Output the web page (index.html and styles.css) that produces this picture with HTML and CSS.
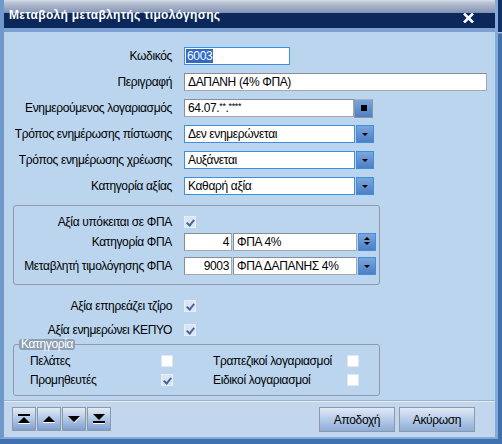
FILE: index.html
```html
<!DOCTYPE html>
<html>
<head>
<meta charset="utf-8">
<link rel="stylesheet" href="styles.css">
</head>
<body>
<div class="win">
  <div class="title">
    <span class="title-text">Μεταβολή μεταβλητής τιμολόγησης</span>
    <svg class="close" width="11" height="10" viewBox="0 0 11 10"><path d="M1 0.5 L10 9.5 M10 0.5 L1 9.5" stroke="#fff" stroke-width="2.6"/></svg>
  </div>
  <div class="band"></div>
  <div class="content">
    <div class="rows">
      <div class="row"><span class="lbl">Κωδικός</span><div class="inp blue w-code"><span class="hl">6003</span></div></div>
      <div class="row"><span class="lbl">Περιγραφή</span><div class="inp gray w-desc">ΔΑΠΑΝΗ (4% ΦΠΑ)</div></div>
      <div class="row"><span class="lbl">Ενημερούμενος λογαριασμός</span><div class="inp gray w-acc">64.07.<sup>**</sup>.<sup>****</sup></div><div class="btn sq"><span class="sqdot"></span></div></div>
      <div class="row"><span class="lbl">Τρόπος ενημέρωσης πίστωσης</span><div class="inp blue w-sel">Δεν ενημερώνεται</div><div class="btn dd"><span class="tri"></span></div></div>
      <div class="row"><span class="lbl">Τρόπος ενημέρωσης χρέωσης</span><div class="inp blue w-sel">Αυξάνεται</div><div class="btn dd"><span class="tri"></span></div></div>
      <div class="row"><span class="lbl">Κατηγορία αξίας</span><div class="inp blue w-sel">Καθαρή αξία</div><div class="btn dd"><span class="tri"></span></div></div>
    </div>

    <div class="group fpa">
      <div class="row chk-row"><span class="lbl">Αξία υπόκειται σε ΦΠΑ</span><span class="cb on"></span></div>
      <div class="row r2"><span class="lbl">Κατηγορία ΦΠΑ</span><div class="inp gray w-num">4</div><div class="inp gray w-sel2">ΦΠΑ 4%</div><div class="btn dd"><span class="tri dbl"></span></div></div>
      <div class="row r3"><span class="lbl">Μεταβλητή τιμολόγησης ΦΠΑ</span><div class="inp gray w-num">9003</div><div class="inp gray w-sel2">ΦΠΑ ΔΑΠΑΝΗΣ 4%</div><div class="btn dd"><span class="tri"></span></div></div>
    </div>

    <div class="flags">
      <div class="row chk-row"><span class="lbl">Αξία επηρεάζει τζίρο</span><span class="cb on"></span></div>
      <div class="row chk-row"><span class="lbl">Αξία ενημερώνει ΚΕΠΥΟ</span><span class="cb on"></span></div>
    </div>

    <div class="group cat">
      <span class="legend">Κατηγορία</span>
      <div class="cat-grid">
        <span class="cl1">Πελάτες</span><span class="cb"></span>
        <span class="cl2">Τραπεζικοί λογαριασμοί</span><span class="cb"></span>
        <span class="cl1">Προμηθευτές</span><span class="cb on"></span>
        <span class="cl2">Ειδικοί λογαριασμοί</span><span class="cb"></span>
      </div>
    </div>
  </div>
  <div class="footer">
    <div class="nav">
      <div class="nbtn"><svg width="14" height="10" viewBox="0 0 14 10"><rect x="1" y="0" width="12" height="2" fill="#000"/><path d="M7 3 L13 9 L1 9 Z" fill="#000"/><rect x="1" y="9" width="12" height="1" fill="#fff"/></svg></div>
      <div class="nbtn"><svg width="14" height="10" viewBox="0 0 14 10"><path d="M7 2 L13 8 L1 8 Z" fill="#000"/><rect x="1" y="8" width="12" height="1" fill="#fff"/></svg></div>
      <div class="nbtn"><svg width="14" height="10" viewBox="0 0 14 10"><path d="M1 2 L13 2 L7 8 Z" fill="#000"/><path d="M7 9 L13 3" stroke="#fff" stroke-width="1"/></svg></div>
      <div class="nbtn"><svg width="14" height="10" viewBox="0 0 14 10"><path d="M1 0 L13 0 L7 6 Z" fill="#000"/><rect x="1" y="7" width="12" height="2" fill="#000"/><rect x="1" y="9" width="12" height="1" fill="#fff"/></svg></div>
    </div>
    <div class="actions">
      <div class="abtn">Αποδοχή</div>
      <div class="abtn">Ακύρωση</div>
    </div>
  </div>
</div>
</body>
</html>
```

FILE: styles.css
```css
* { box-sizing: border-box; }
html, body { margin: 0; padding: 0; }
body {
  width: 502px;
  height: 444px;
  overflow: hidden;
  background: linear-gradient(#0f2f68 0, #0f2f68 32px, #d9e6f4 32px, #3f70b0 34px);
  font-family: "Liberation Sans", Arial, sans-serif;
  font-size: 12px;
  letter-spacing: -0.35px;
  color: #000;
}
.win {
  width: 498px;
  height: 439px;
  background: #bbd5ef;
  border-left: 4px solid #6f99ca;
  border-right: 3px solid #86aad6;
  border-bottom: 2px solid #86aad6;
  display: flex;
  flex-direction: column;
}
.title {
  height: 28px;
  flex: none;
  background: linear-gradient(#d5dde8 0, #b7c1d1 3px, #8d9cbb 11px, #7f90b2 13px, #0c285a 13px, #0c285a 28px);
  display: flex;
  align-items: flex-start;
  justify-content: space-between;
  padding: 8px 21px 0 5px;
}
.title-text {
  color: #fff;
  font-family: "Liberation Sans", Arial, sans-serif;
  font-weight: bold;
  font-size: 12px;
  letter-spacing: 0.3px;
  line-height: 14px;
}
.close { margin-top: 5px; }
.band { height: 4px; flex: none; background: #7ba0d1; }
.content {
  flex: 1;
  padding: 15px 0 0 0;
}
.rows { display: flex; flex-direction: column; gap: 8px; }
.row { display: flex; align-items: center; height: 18px; }
.lbl {
  width: 168px;
  margin-right: 12px;
  text-align: right;
  white-space: nowrap;
}
.inp {
  height: 18px;
  background: #fff;
  padding: 0 3px;
  line-height: 16px;
  white-space: nowrap;
  overflow: hidden;
}
.inp.blue { border: 1px solid #3d8fe0; }
.inp.gray { border: 1px solid #a0a8b2; border-top-color: #868e98; border-left-color: #868e98; }
.inp sup { font-size: 9px; vertical-align: 3px; line-height: 0; }
.hl { background: #316ac5; color: #fff; padding: 0 1px; margin-left: -2px; }
.w-code { width: 106px; }
.w-desc { width: 303px; }
.w-acc { width: 170px; }
.w-sel { width: 171px; }
.w-num { width: 48px; text-align: right; padding-right: 2px; }
.w-sel2 { width: 124px; }
.btn {
  width: 19px;
  height: 19px;
  margin-left: 1px;
  display: flex;
  align-items: center;
  justify-content: center;
  background: linear-gradient(#7da6db, #4c7fc3);
}
.btn.sq { margin-left: 0; border: 1px solid #8d96a2; border-top-color: #a9b1bb; }
.btn.dd { border: 1px solid #3d8fe0; height: 18px; width: 18px; }
.sqdot { width: 6px; height: 6px; background: #000; }
.tri {
  width: 0; height: 0;
  border-left: 3px solid transparent;
  border-right: 3px solid transparent;
  border-top: 3px solid #000;
  position: relative;
}
.tri.dbl { margin-top: 2px; }
.tri.dbl::before {
  content: "";
  position: absolute;
  left: -3px; top: -8px;
  border-left: 3px solid transparent;
  border-right: 3px solid transparent;
  border-bottom: 3px solid #000;
}
.group {
  margin-left: 9px;
  width: 367px;
  border: 1px solid #8f9aa8;
  border-radius: 3px;
  position: relative;
}
.fpa { margin-top: 10px; padding: 9px 0 9px 0; }
.fpa .lbl { width: 158px; }
.fpa .chk-row { height: 14px; }
.fpa .r2 { margin-top: 4px; }
.fpa .r3 { margin-top: 6px; }
.fpa .r2 .w-sel2, .fpa .r3 .w-sel2 { margin-left: 1px; }
.cb {
  width: 12px;
  height: 12px;
  background: #fff;
  border: 1px solid #dfe7f0;
  display: inline-block;
  position: relative;
}
.cb.on { background: #dbe6f2; border-color: #e8eef5; }
.cb.on::after {
  content: "";
  position: absolute;
  left: 3px; top: 1px;
  width: 3px; height: 6px;
  border-right: 2px solid #46679a;
  border-bottom: 2px solid #46679a;
  transform: rotate(40deg);
}
.flags { margin-top: 12px; display: flex; flex-direction: column; gap: 6px; }
.flags .chk-row { height: 18px; }
.cat { margin-top: 5px; height: 52px; padding: 10px 0 0 16px; }
.legend {
  position: absolute;
  left: 5px; top: -6px;
  height: 11px;
  line-height: 10px;
  padding: 0 2px;
  background: #8e9fb3;
  color: #fff;
  border-radius: 3px;
}
.cat-grid {
  display: grid;
  grid-template-columns: 131px 12px 174px 12px;
  row-gap: 7px;
  align-items: center;
}
.cat-grid > span { height: 12px; line-height: 12px; white-space: nowrap; }
.cat-grid .cl2 { padding-left: 40px; }
.footer {
  height: 37px;
  flex: none;
  background: #c2d7ee;
  border-top: 1px solid #9fb2c8;
  box-shadow: inset 0 1px 0 #e4edf7;
  display: flex;
  justify-content: space-between;
  align-items: flex-start;
  padding: 6px 20px 0 8px;
}
.nav { display: flex; gap: 1px; }
.nbtn {
  width: 24px;
  height: 24px;
  border: 1px solid #8e99a8;
  background: linear-gradient(#e2ebf6, #a7c0e2 60%, #7f9fd0);
  display: flex;
  align-items: center;
  justify-content: center;
}
.actions { display: flex; gap: 4px; }
.abtn {
  width: 76px;
  height: 25px;
  border: 1px solid #8e99a8;
  background: linear-gradient(#e0eaf6, #b2c8e6 55%, #8eacd8);
  display: flex;
  align-items: center;
  justify-content: center;
}
```
